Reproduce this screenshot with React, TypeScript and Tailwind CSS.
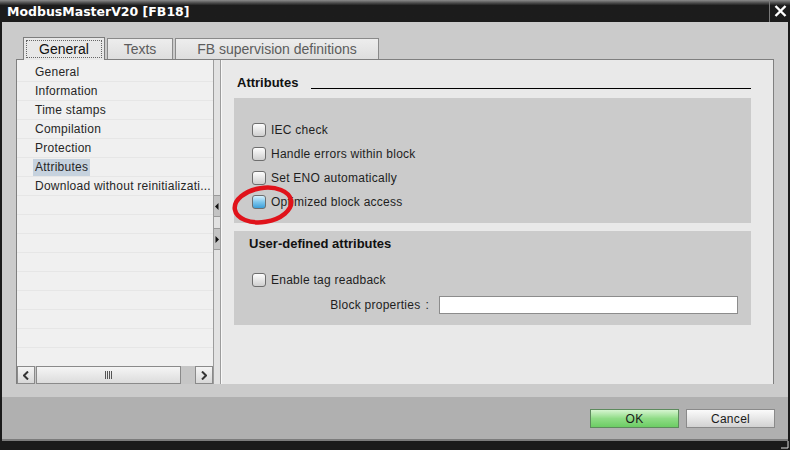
import React from 'react';

const navItems = [
    'General',
    'Information',
    'Time stamps',
    'Compilation',
    'Protection',
    'Attributes',
    'Download without reinitializati...',
];

const Checkbox: React.FC<{ blue?: boolean }> = ({ blue }) => (
    <span
        className={`block w-[14px] h-[14px] rounded-[3px] border border-[#6e6e6e] shrink-0 ${
            blue ? 'bg-linear-to-b from-[#d6f0fc] via-[#7cc6ec] to-[#3a9fd8]' : 'bg-linear-to-b from-[#fdfdfd] to-[#cfcfcf]'
        }`}
    />
);

const CheckRow: React.FC<{ label: string; blue?: boolean }> = ({ label, blue }) => (
    <div className="h-[24px] flex items-center gap-[5px] pl-[18px]">
        <Checkbox blue={blue} />
        <span className="text-[12px] text-[#1e1e1e] tracking-[0.25px]">{label}</span>
    </div>
);

const ScrollBtn: React.FC<{ dir: 'l' | 'r' }> = ({ dir }) => (
    <div className="w-[18px] h-[18px] border border-[#8a8a8a] bg-linear-to-b from-[#f4f4f4] to-[#d8d8d8] flex items-center justify-center">
        <svg width="6" height="9" viewBox="0 0 6 9">
            <path d={dir === 'l' ? 'M5 0.5 L1 4.5 L5 8.5' : 'M1 0.5 L5 4.5 L1 8.5'} stroke="#333" strokeWidth="2" fill="none" />
        </svg>
    </div>
);

const SplitBtn: React.FC<{ dir: 'l' | 'r' }> = ({ dir }) => (
    <div className="h-[22px] bg-[#c4c4c4] border-y border-[#9a9a9a] flex items-center justify-center">
        <svg width="4" height="7" viewBox="0 0 4 7">
            <path d={dir === 'l' ? 'M3.5 0 L0 3.5 L3.5 7 Z' : 'M0.5 0 L4 3.5 L0.5 7 Z'} fill="#111" />
        </svg>
    </div>
);

export default function App() {
    return (
        <div className="relative w-[790px] h-[450px] bg-[#1a1a1a] flex flex-col font-['Liberation_Sans',Arial,sans-serif] overflow-hidden">
            {/* title bar */}
            <div className="h-[22px] shrink-0 flex items-center bg-linear-to-b from-[#8c8c8c] via-[#1c1c1c] via-[25%] to-[#1c1c1c] pl-[7px]">
                <span className="flex-1 text-white text-[12.5px] font-bold font-['DejaVu_Sans',sans-serif] pt-[2px]">
                    ModbusMasterV20 [FB18]
                </span>
                <div className="h-full w-[21px] border-l border-[#7a7a7a] flex items-center justify-center">
                    <svg width="13" height="12" viewBox="0 0 13 12">
                        <path d="M1.5 1 L11.5 11 M11.5 1 L1.5 11" stroke="#fff" strokeWidth="2.4" />
                    </svg>
                </div>
            </div>

            {/* body */}
            <div className="mx-[2px] h-[417px] shrink-0 bg-[#cbcbcb] flex flex-col">
                {/* tabs */}
                <div className="pt-[15px] pl-[21px] flex items-end h-[37px] text-[14px]">
                    <div className="relative z-10 w-[82px] h-[23px] -mb-px bg-[#e8e8e8] border border-b-0 border-[#7d7d7d] p-[2px]">
                        <div className="h-full border border-dotted border-[#666] flex items-center justify-center text-[#111]">
                            General
                        </div>
                    </div>
                    <div className="ml-[2px] w-[66px] h-[21px] bg-linear-to-b from-[#ededed] to-[#dedede] border border-b-0 border-[#8a8a8a] flex items-center justify-center text-[#5c5c5c]">
                        Texts
                    </div>
                    <div className="ml-[2px] w-[204px] h-[21px] bg-linear-to-b from-[#ededed] to-[#dedede] border border-b-0 border-[#8a8a8a] flex items-center justify-center text-[#5c5c5c]">
                        FB supervision definitions
                    </div>
                </div>

                {/* content panel */}
                <div className="mx-[14px] h-[325px] border-t border-x border-[#7f7f7f] flex">
                    {/* nav */}
                    <div className="w-[196px] bg-[#f0f0f0] flex flex-col">
                        <div className="flex-1 overflow-hidden pt-[3px]">
                            {navItems.concat(Array(9).fill('')).map((item, i) => (
                                <div key={i} className="h-[19px] border-b border-[#e6e6e6] pl-[16px] flex items-center">
                                    <span
                                        className={`px-[2px] leading-[17px] text-[12px] text-[#262626] tracking-[0.25px] whitespace-nowrap ${
                                            item === 'Attributes' ? 'bg-[#c6d2de]' : ''
                                        }`}
                                    >
                                        {item}
                                    </span>
                                </div>
                            ))}
                        </div>
                        <div className="h-[18px] flex shrink-0 bg-[#c6c6c6]">
                            <ScrollBtn dir="l" />
                            <div className="ml-[1px] w-[145px] h-[18px] border border-[#8a8a8a] bg-linear-to-b from-[#f5f5f5] to-[#dcdcdc] flex items-center justify-center">
                                <svg width="8" height="8" viewBox="0 0 8 8">
                                    <path d="M0.5 0 V8 M2.5 0 V8 M4.5 0 V8 M6.5 0 V8" stroke="#555" strokeWidth="1" />
                                </svg>
                            </div>
                            <div className="flex-1" />
                            <ScrollBtn dir="r" />
                        </div>
                    </div>

                    {/* splitter */}
                    <div className="w-[8px] bg-[#e2e2e2] border-x border-[#9c9c9c] flex flex-col">
                        <div className="h-[135px]" />
                        <SplitBtn dir="l" />
                        <div className="h-[11px]" />
                        <SplitBtn dir="r" />
                    </div>

                    {/* right panel */}
                    <div className="flex-1 bg-[#e9e9e9] border-l border-[#f8f8f8] pl-[12px] pr-[22px]">
                        <div className="h-[32px] pt-[14px] pl-[3px] flex items-center gap-[13px]">
                            <span className="text-[13px] font-bold text-[#111]">Attributes</span>
                            <div className="flex-1 h-px bg-black mt-[10px]" />
                        </div>
                        <div className="mt-[6px] h-[125px] bg-[#cbcbcb] pt-[20px]">
                            <CheckRow label="IEC check" />
                            <CheckRow label="Handle errors within block" />
                            <CheckRow label="Set ENO automatically" />
                            <CheckRow label="Optimized block access" blue />
                        </div>
                        <div className="mt-[8px] h-[94px] bg-[#cbcbcb] pt-[4px]">
                            <div className="h-[17px] pl-[15px] flex items-center text-[13px] font-bold text-[#111]">
                                User-defined attributes
                            </div>
                            <div className="mt-[16px]">
                                <CheckRow label="Enable tag readback" />
                            </div>
                            <div className="mt-[4px] h-[18px] flex items-center justify-end pr-[13px] gap-[10px]">
                                <span className="text-[12px] text-[#1e1e1e] tracking-[0.25px]">
                                    Block properties<span className="ml-[5px]">:</span>
                                </span>
                                <div className="w-[299px] h-[18px] bg-white border border-[#8c8c8c]" />
                            </div>
                        </div>
                    </div>
                </div>

                <div className="h-[13px]" />

                {/* footer */}
                <div className="flex-1 bg-[#b0b0b0] flex justify-end items-start pt-[12px] pr-[13px] gap-[7px] text-[12px]">
                    <button className="w-[89px] h-[19px] border border-[#5d8a5d] bg-linear-to-b from-[#d6f5d0] via-[#8fdc86] to-[#6ccd64] text-[#1a1a1a] tracking-[0.3px] flex items-center justify-center">
                        OK
                    </button>
                    <button className="w-[89px] h-[19px] border border-[#8a8a8a] bg-linear-to-b from-[#fbfbfb] to-[#d2d2d2] text-[#1a1a1a] tracking-[0.3px] flex items-center justify-center">
                        Cancel
                    </button>
                </div>
            </div>

            {/* bottom edge */}
            <div className="mx-[2px] h-[2px] bg-[#7c7c7c]" />
            <div className="flex-1 flex justify-end items-start">
                <svg width="8" height="8" viewBox="0 0 8 8" className="mr-[1px]">
                    <path d="M7 0 V7 H0" stroke="#ddd" strokeWidth="1" fill="none" />
                </svg>
            </div>

            {/* red annotation ellipse */}
            <svg className="absolute left-[228px] top-[183px]" width="72" height="46" viewBox="0 0 72 46">
                <ellipse cx="35" cy="22" rx="28.5" ry="17" transform="rotate(-9 35 22)" fill="none" stroke="#e0131b" strokeWidth="4.5" />
            </svg>
        </div>
    );
}
